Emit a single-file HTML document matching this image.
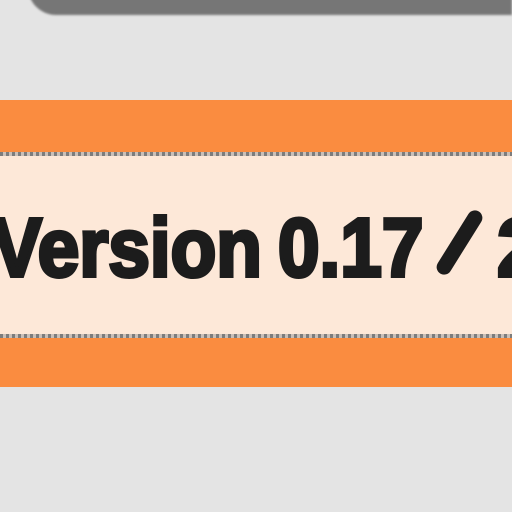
<!DOCTYPE html>
<html><head><style>
html,body{margin:0;padding:0}
body{width:512px;height:512px;background:#e4e4e4;position:relative;overflow:hidden;font-family:"Liberation Sans",sans-serif}
.wrap{position:absolute;left:0;top:0;width:512px;height:512px;overflow:hidden}
.gray{position:absolute;left:28px;top:-40px;width:484px;height:55px;background:#767676;border-radius:0 0 0 28px;filter:blur(1px)}
.band{position:absolute;left:0;top:100px;width:512px;height:287px;background:#fa8c40}
.peach{position:absolute;left:0;top:154px;width:512px;height:182px;background:#fde8d8}
.dots{position:absolute;left:0;width:512px;height:4px;background:repeating-linear-gradient(90deg,#7d7d7d 0 3px,#c9bfb8 3px 6px)}
.w{position:absolute;top:198px;font-weight:bold;font-size:83px;line-height:100px;color:#1c1c1c;-webkit-text-stroke:4px #1c1c1c;transform-origin:0 0;white-space:nowrap}
.sl{position:absolute;left:452px;top:206px;width:15px;height:73px;background:#1c1c1c;border-radius:8px;transform:rotate(32deg)}
</style></head><body><div class="wrap">
<div class="gray"></div>
<div class="band"></div>
<div class="peach"></div>
<div class="dots" style="top:152px"></div>
<div class="dots" style="top:334px"></div>
<div class="w" style="left:-8px;transform:scaleX(0.9)">Version</div>
<div class="w" style="left:278px;transform:scaleX(0.9)">0.17</div>
<div class="sl"></div>
<div class="w" style="left:497px">2</div>
</div></body></html>
